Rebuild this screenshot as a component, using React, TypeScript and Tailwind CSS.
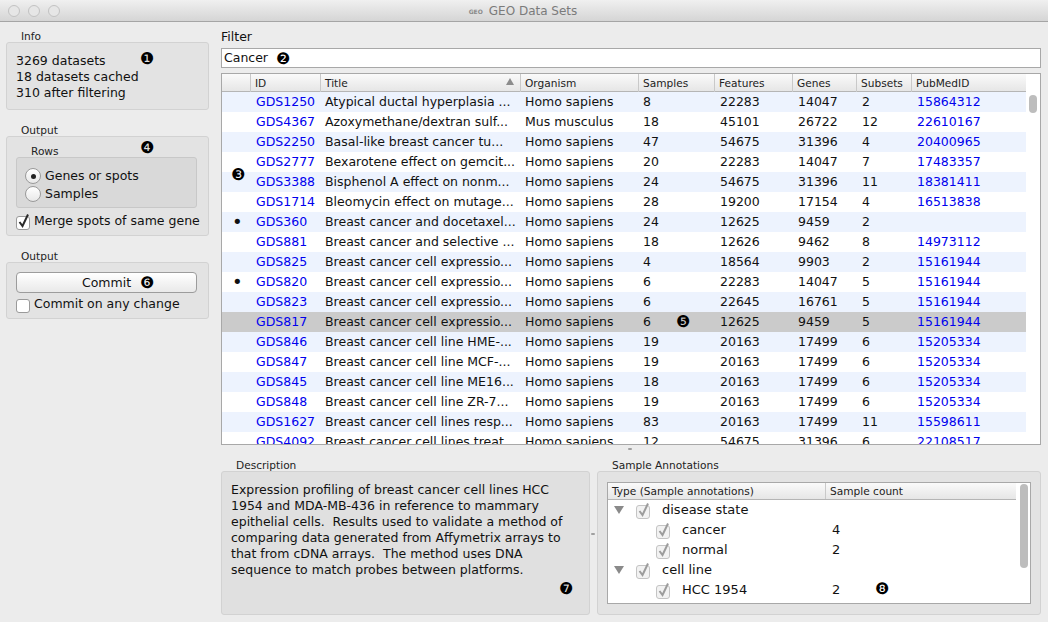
const rows = [
  ["", "GDS1250", "Atypical ductal hyperplasia ...", "Homo sapiens", "8", "22283", "14047", "2", "15864312"],
  ["", "GDS4367", "Azoxymethane/dextran sulf...", "Mus musculus", "18", "45101", "26722", "12", "22610167"],
  ["", "GDS2250", "Basal-like breast cancer tu...", "Homo sapiens", "47", "54675", "31396", "4", "20400965"],
  ["", "GDS2777", "Bexarotene effect on gemcit...", "Homo sapiens", "20", "22283", "14047", "7", "17483357"],
  ["", "GDS3388", "Bisphenol A effect on nonm...", "Homo sapiens", "24", "54675", "31396", "11", "18381411"],
  ["", "GDS1714", "Bleomycin effect on mutage...", "Homo sapiens", "28", "19200", "17154", "4", "16513838"],
  ["•", "GDS360", "Breast cancer and docetaxel...", "Homo sapiens", "24", "12625", "9459", "2", ""],
  ["", "GDS881", "Breast cancer and selective ...", "Homo sapiens", "18", "12626", "9462", "8", "14973112"],
  ["", "GDS825", "Breast cancer cell expressio...", "Homo sapiens", "4", "18564", "9903", "2", "15161944"],
  ["•", "GDS820", "Breast cancer cell expressio...", "Homo sapiens", "6", "22283", "14047", "5", "15161944"],
  ["", "GDS823", "Breast cancer cell expressio...", "Homo sapiens", "6", "22645", "16761", "5", "15161944"],
  ["", "GDS817", "Breast cancer cell expressio...", "Homo sapiens", "6", "12625", "9459", "5", "15161944"],
  ["", "GDS846", "Breast cancer cell line HME-...", "Homo sapiens", "19", "20163", "17499", "6", "15205334"],
  ["", "GDS847", "Breast cancer cell line MCF-...", "Homo sapiens", "19", "20163", "17499", "6", "15205334"],
  ["", "GDS845", "Breast cancer cell line ME16...", "Homo sapiens", "18", "20163", "17499", "6", "15205334"],
  ["", "GDS848", "Breast cancer cell line ZR-7...", "Homo sapiens", "19", "20163", "17499", "6", "15205334"],
  ["", "GDS1627", "Breast cancer cell lines resp...", "Homo sapiens", "83", "20163", "17499", "11", "15598611"],
  ["", "GDS4092", "Breast cancer cell lines treat...", "Homo sapiens", "12", "54675", "31396", "6", "22108517"],
];

const headers = ["", "ID", "Title", "Organism", "Samples", "Features", "Genes", "Subsets", "PubMedID"];
const gridCols = "grid grid-cols-[28px_70px_200px_118px_76px_78px_64px_55px_115px]";

function Marker({ glyph, className }: { glyph: string; className: string }) {
  return <span className={`absolute text-[16px] leading-none text-black ${className}`}>{glyph}</span>;
}

function GroupLabel({ children, className = "" }: { children: string; className?: string }) {
  return <div className={`h-[12px] whitespace-nowrap text-[10.6px] leading-[12px] text-[#222] ${className}`}>{children}</div>;
}

function Check({ checked, muted }: { checked?: boolean; muted?: boolean }) {
  return (
    <svg width="15" height="17" viewBox="0 0 15 17" className="shrink-0">
      <rect x="0.5" y="3.5" width="13" height="13" rx="2.5" fill={muted ? "#f2f2f2" : "#fff"} stroke={muted ? "#c4c4c4" : "#9a9a9a"} />
      {checked && (
        <path d="M3.5 9 L6.5 13 L12 1.5" fill="none" stroke={muted ? "#9c9c9c" : "#2a2a2a"} strokeWidth="2" />
      )}
    </svg>
  );
}

function Radio({ checked }: { checked?: boolean }) {
  return (
    <span className="flex h-4 w-4 shrink-0 items-center justify-center rounded-full border border-[#9a9a9a] bg-gradient-to-b from-white to-[#e8e8e8]">
      {checked && <span className="h-[5px] w-[5px] rounded-full bg-[#222]" />}
    </span>
  );
}

function TreeRow({ depth, label, count }: { depth: number; label: string; count?: string }) {
  return (
    <div className="flex h-5 items-center text-[13px] text-[#111]">
      {depth === 0 ? (
        <svg width="10" height="8" viewBox="0 0 10 8" className="ml-[6px] mr-[12px] shrink-0">
          <path d="M0 0 H10 L5 8 Z" fill="#8a8a8a" />
        </svg>
      ) : (
        <span className="w-[48px] shrink-0" />
      )}
      <Check checked muted />
      <span className="ml-[11px] w-[150px] whitespace-nowrap">{label}</span>
      {count && <span>{count}</span>}
    </div>
  );
}

export default function App() {
  return (
    <div className="relative flex h-[622px] w-[1048px] flex-col overflow-hidden bg-[#ececec] font-['DejaVu_Sans',sans-serif] text-[12.5px] text-[#111]">
      {/* Title bar */}
      <div className="relative flex h-[22px] shrink-0 items-center justify-center border-b border-[#a5a5a5] bg-gradient-to-b from-[#f0f0f0] to-[#d5d5d5] pr-[2px] pt-[1px]">
        <div className="absolute left-[8px] top-[5px] flex gap-2">
          <span className="h-3 w-3 rounded-full border border-[#c2c2c2] bg-[#e6e6e6]" />
          <span className="h-3 w-3 rounded-full border border-[#c2c2c2] bg-[#e6e6e6]" />
          <span className="h-3 w-3 rounded-full border border-[#c2c2c2] bg-[#e6e6e6]" />
        </div>
        <span className="mr-[6px] text-[6px] font-bold text-[#8a8a8a]">GEO</span>
        <span className="text-[12px] text-[#7b7b7b]">GEO Data Sets</span>
      </div>

      <div className="flex min-h-0 flex-1">
        {/* Left column */}
        <div className="ml-[6px] mr-[12px] flex w-[203px] shrink-0 flex-col pt-[8px]">
          <GroupLabel className="pl-[15px]">Info</GroupLabel>
          <div className="h-[68px] rounded-[3px] border border-[#d2d2d2] bg-[#e3e3e3] pl-[9px] pt-[10px] leading-[16px]">
            <div>3269 datasets</div>
            <div>18 datasets cached</div>
            <div>310 after filtering</div>
          </div>
          <GroupLabel className="mt-[14px] pl-[15px]">Output</GroupLabel>
          <div className="h-[100px] rounded-[3px] border border-[#d2d2d2] bg-[#e3e3e3] pl-[9px] pr-[11px] pt-[8px]">
            <GroupLabel className="pl-[15px]">Rows</GroupLabel>
            <div className="h-[51px] rounded-[3px] border border-[#c8c8c8] bg-[#d9d9d9] pl-[8px] pt-[9px]">
              <div className="flex h-[18px] items-center gap-[4px]"><Radio checked />Genes or spots</div>
              <div className="flex h-[18px] items-center gap-[4px]"><Radio />Samples</div>
            </div>
            <div className="mt-[3px] flex h-5 items-center gap-[3px] whitespace-nowrap"><Check checked />Merge spots of same gene</div>
          </div>
          <GroupLabel className="mt-[14px] pl-[15px]">Output</GroupLabel>
          <div className="h-[57px] rounded-[3px] border border-[#d2d2d2] bg-[#e3e3e3] pl-[9px] pr-[11px] pt-[9px]">
            <div className="flex h-[21px] items-center justify-center rounded-[4px] border border-[#9c9c9c] bg-gradient-to-b from-white to-[#e9e9e9] pt-[1px]">Commit</div>
            <div className="mt-[1px] flex h-5 items-center gap-[3px] whitespace-nowrap"><Check />Commit on any change</div>
          </div>
        </div>

        {/* Right column */}
        <div className="flex w-[820px] shrink-0 flex-col pt-[6px]">
          <div className="h-[20px] pt-[1px] text-[12.5px] leading-[16px]">Filter</div>
          <div className="flex h-[20px] items-center border border-[#a8a8a8] bg-white pl-[2px] pt-[1px]">Cancer</div>
          <div className="mt-[5px] flex h-[372px] border border-[#a8a8a8] bg-white">
            <div className="w-[804px] shrink-0 overflow-hidden">
              <div className={`${gridCols} h-[18px] border-b border-[#b5b5b5] bg-gradient-to-b from-[#fafafa] to-[#e6e6e6] text-[10.6px] leading-[18px] text-[#222]`}>
                {headers.map((h, i) => (
                  <div key={i} className={`relative whitespace-nowrap pl-[4px] ${i > 0 ? "border-l border-[#c9c9c9]" : ""}`}>
                    {h}
                    {h === "Title" && (
                      <svg width="8" height="7" viewBox="0 0 8 7" className="absolute right-[6px] top-[4px]">
                        <path d="M4 0 L8 7 H0 Z" fill="#8c8c8c" />
                      </svg>
                    )}
                  </div>
                ))}
              </div>
              {rows.map((r, i) => (
                <div
                  key={r[1]}
                  className={`${gridCols} h-5 leading-5 ${r[1] === "GDS817" ? "bg-[#cbcbcb]" : i % 2 === 0 ? "bg-[#edf3fe]" : "bg-white"}`}
                >
                  {r.map((c, j) => (
                    <div
                      key={j}
                      className={`overflow-hidden whitespace-nowrap ${j === 1 || j === 8 ? "text-[#0000ee]" : ""} ${j === 0 ? "pl-[10px] text-[18px]" : j === 2 || j === 3 || j === 4 ? "pl-[5px]" : "pl-[6px]"}`}
                    >
                      {c}
                    </div>
                  ))}
                </div>
              ))}
            </div>
            <div className="flex-1 pl-[3px] pt-[21px]">
              <div className="h-[18px] w-[8px] rounded-full bg-[#bdbdbd]" />
            </div>
          </div>

          {/* Bottom panels */}
          <div className="mt-[14px] flex gap-[7px]">
            <div className="w-[369px] shrink-0">
              <GroupLabel className="pl-[15px]">Description</GroupLabel>
              <div className="h-[144px] rounded-[3px] border border-[#d2d2d2] bg-[#e0e0e0] px-[9px] pt-[10px] leading-[16px] whitespace-nowrap">
                <div>Expression profiling of breast cancer cell lines HCC</div>
                <div>1954 and MDA-MB-436 in reference to mammary</div>
                <div>epithelial cells.&nbsp; Results used to validate a method of</div>
                <div>comparing data generated from Affymetrix arrays to</div>
                <div>that from cDNA arrays.&nbsp; The method uses DNA</div>
                <div>sequence to match probes between platforms.</div>
              </div>
            </div>
            <div className="w-[444px] shrink-0">
              <GroupLabel className="pl-[15px]">Sample Annotations</GroupLabel>
              <div className="h-[144px] rounded-[3px] border border-[#d2d2d2] bg-[#e3e3e3] px-[9px] pt-[10px]">
                <div className="flex h-[122px] border border-[#a8a8a8] bg-white">
                  <div className="w-[408px] shrink-0 overflow-hidden">
                    <div className="grid h-[17px] grid-cols-[217px_191px] border-b border-[#b5b5b5] bg-gradient-to-b from-[#fafafa] to-[#e6e6e6] text-[10.6px] leading-[16px] text-[#222]">
                      <div className="pl-[4px]">Type (Sample annotations)</div>
                      <div className="border-l border-[#c9c9c9] pl-[4px]">Sample count</div>
                    </div>
                    <TreeRow depth={0} label="disease state" />
                    <TreeRow depth={1} label="cancer" count="4" />
                    <TreeRow depth={1} label="normal" count="2" />
                    <TreeRow depth={0} label="cell line" />
                    <TreeRow depth={1} label="HCC 1954" count="2" />
                    <TreeRow depth={1} label="" />
                  </div>
                  <div className="flex-1 pl-[4px] pt-[1px]">
                    <div className="h-[84px] w-[8px] rounded-full bg-[#bdbdbd]" />
                  </div>
                </div>
              </div>
            </div>
          </div>
        </div>
      </div>

      {/* Callout markers and splitter grips */}
      <Marker glyph="❶" className="left-[140px] top-[51px]" />
      <Marker glyph="❷" className="left-[276px] top-[51px]" />
      <Marker glyph="❸" className="left-[231px] top-[167px]" />
      <Marker glyph="❹" className="left-[140px] top-[140px]" />
      <Marker glyph="❺" className="left-[676px] top-[314px]" />
      <Marker glyph="❻" className="left-[140px] top-[275px]" />
      <Marker glyph="❼" className="left-[559px] top-[581px]" />
      <Marker glyph="❽" className="left-[875px] top-[581px]" />
      <span className="absolute left-[628px] top-[448px] h-[2px] w-[4px] rounded-full bg-[#a0a0a0]" />
      <span className="absolute left-[591px] top-[533px] h-[2px] w-[4px] rounded-full bg-[#a0a0a0]" />
    </div>
  );
}
